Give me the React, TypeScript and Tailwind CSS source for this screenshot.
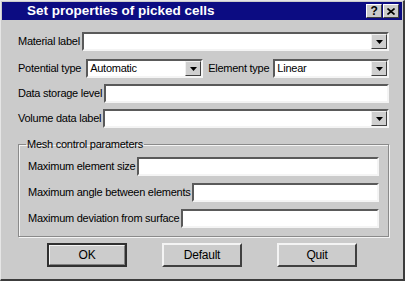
const font = "font-['Liberation_Sans',Arial,sans-serif]";

function Field({ value = "" }: { value?: string }) {
  return (
    <div className="flex h-[19px] min-w-0 flex-1 items-center border-2 border-t-[#5a5a5a] border-l-[#5a5a5a] border-r-[#f4f4f4] border-b-[#f4f4f4] bg-white px-[2px]">
      <span className="truncate">{value}</span>
    </div>
  );
}

function Combo({ value = "", className = "flex-1" }: { value?: string; className?: string }) {
  return (
    <div className={`flex h-[19px] min-w-0 items-center border-2 border-t-[#5a5a5a] border-l-[#5a5a5a] border-r-[#f4f4f4] border-b-[#f4f4f4] bg-white ${className}`}>
      <span className="flex-1 truncate pl-[2px]">{value}</span>
      <div className="flex h-[15px] w-[16px] items-center justify-center border border-t-[#f0f0f0] border-l-[#f0f0f0] border-r-[#404040] border-b-[#404040] bg-[#cfcfcf]">
        <svg width="7" height="4" viewBox="0 0 7 4">
          <path d="M0 0h7L3.5 4z" fill="#000" />
        </svg>
      </div>
    </div>
  );
}

function Btn({ label, primary = false }: { label: string; primary?: boolean }) {
  return (
    <button
      className={`h-[24px] w-[80px] ${
        primary ? "border-[2px] border-[#303030]" : "border-2 border-t-[#f4f4f4] border-l-[#f4f4f4] border-r-[#404040] border-b-[#404040]"
      } bg-[#cccccc] text-[12px] text-black`}
    >
      {primary ? (
        <span className="flex h-full w-full items-center justify-center border border-t-[#f4f4f4] border-l-[#f4f4f4] border-r-[#808080] border-b-[#808080]">
          {label}
        </span>
      ) : (
        label
      )}
    </button>
  );
}

export default function App() {
  return (
    <div className={`h-[282px] w-[411px] bg-white ${font}`}>
      <div className="flex h-[281px] w-[405px] flex-col border-t border-l border-t-[#e6e6e6] border-l-[#e6e6e6] border-r-2 border-b-2 border-r-[#3c3c3c] border-b-[#3c3c3c] bg-[#cbcbcb] text-[11px] tracking-[-0.25px] text-black">
        <div className="mx-[1px] mt-[1px] flex h-[18px] items-center bg-[#0c0c82] pr-[3px] pl-[25px]">
          <span className="flex-1 text-[13.5px] font-bold tracking-normal text-white">Set properties of picked cells</span>
          <div className="flex gap-0">
            <div className="flex h-[14px] w-[16px] items-center justify-center border border-t-white border-l-white border-r-[#404040] border-b-[#404040] bg-[#cbcbcb] text-[12px] font-bold leading-none">?</div>
            <div className="ml-[1px] flex h-[14px] w-[16px] items-center justify-center border border-t-white border-l-white border-r-[#404040] border-b-[#404040] bg-[#cbcbcb]">
              <svg width="8" height="7" viewBox="0 0 8 7">
                <path d="M0.5 0.5L7.5 6.5M7.5 0.5L0.5 6.5" stroke="#000" strokeWidth="1.6" />
              </svg>
            </div>
          </div>
        </div>

        <div className="flex flex-col pt-[12px] pr-[14px] pl-[17px]">
          <div className="flex items-center gap-[2px]">
            <span className="shrink-0">Material label</span>
            <Combo />
          </div>
          <div className="mt-[8px] flex items-center gap-[2px]">
            <span className="shrink-0">Potential type</span>
            <Combo value="Automatic" className="ml-[3px] w-[117px] shrink-0" />
            <span className="ml-[3px] shrink-0">Element type</span>
            <Combo value="Linear" className="ml-[2px] flex-1" />
          </div>
          <div className="mt-[6px] flex items-center gap-[2px]">
            <span className="shrink-0">Data storage level</span>
            <Field />
          </div>
          <div className="mt-[6px] flex items-center gap-[2px]">
            <span className="shrink-0">Volume data label</span>
            <Combo />
          </div>

          <fieldset className="mt-[8px] h-[101px] border border-[#8a8a8a] px-[9px] pt-[4px] shadow-[inset_1px_1px_0_#f4f4f4,1px_1px_0_#f4f4f4]">
            <legend className="ml-[-2px] px-[1px]">Mesh control parameters</legend>
            <div className="flex flex-col gap-[7px]">
              <div className="flex items-center gap-[2px]">
                <span className="shrink-0">Maximum element size</span>
                <Field />
              </div>
              <div className="flex items-center gap-[2px]">
                <span className="shrink-0">Maximum angle between elements</span>
                <Field />
              </div>
              <div className="flex items-center gap-[2px]">
                <span className="shrink-0">Maximum deviation from surface</span>
                <Field />
              </div>
            </div>
          </fieldset>

          <div className="mt-[6px] flex pl-[29px] gap-[35px]">
            <Btn label="OK" primary />
            <Btn label="Default" />
            <Btn label="Quit" />
          </div>
        </div>
      </div>
    </div>
  );
}
